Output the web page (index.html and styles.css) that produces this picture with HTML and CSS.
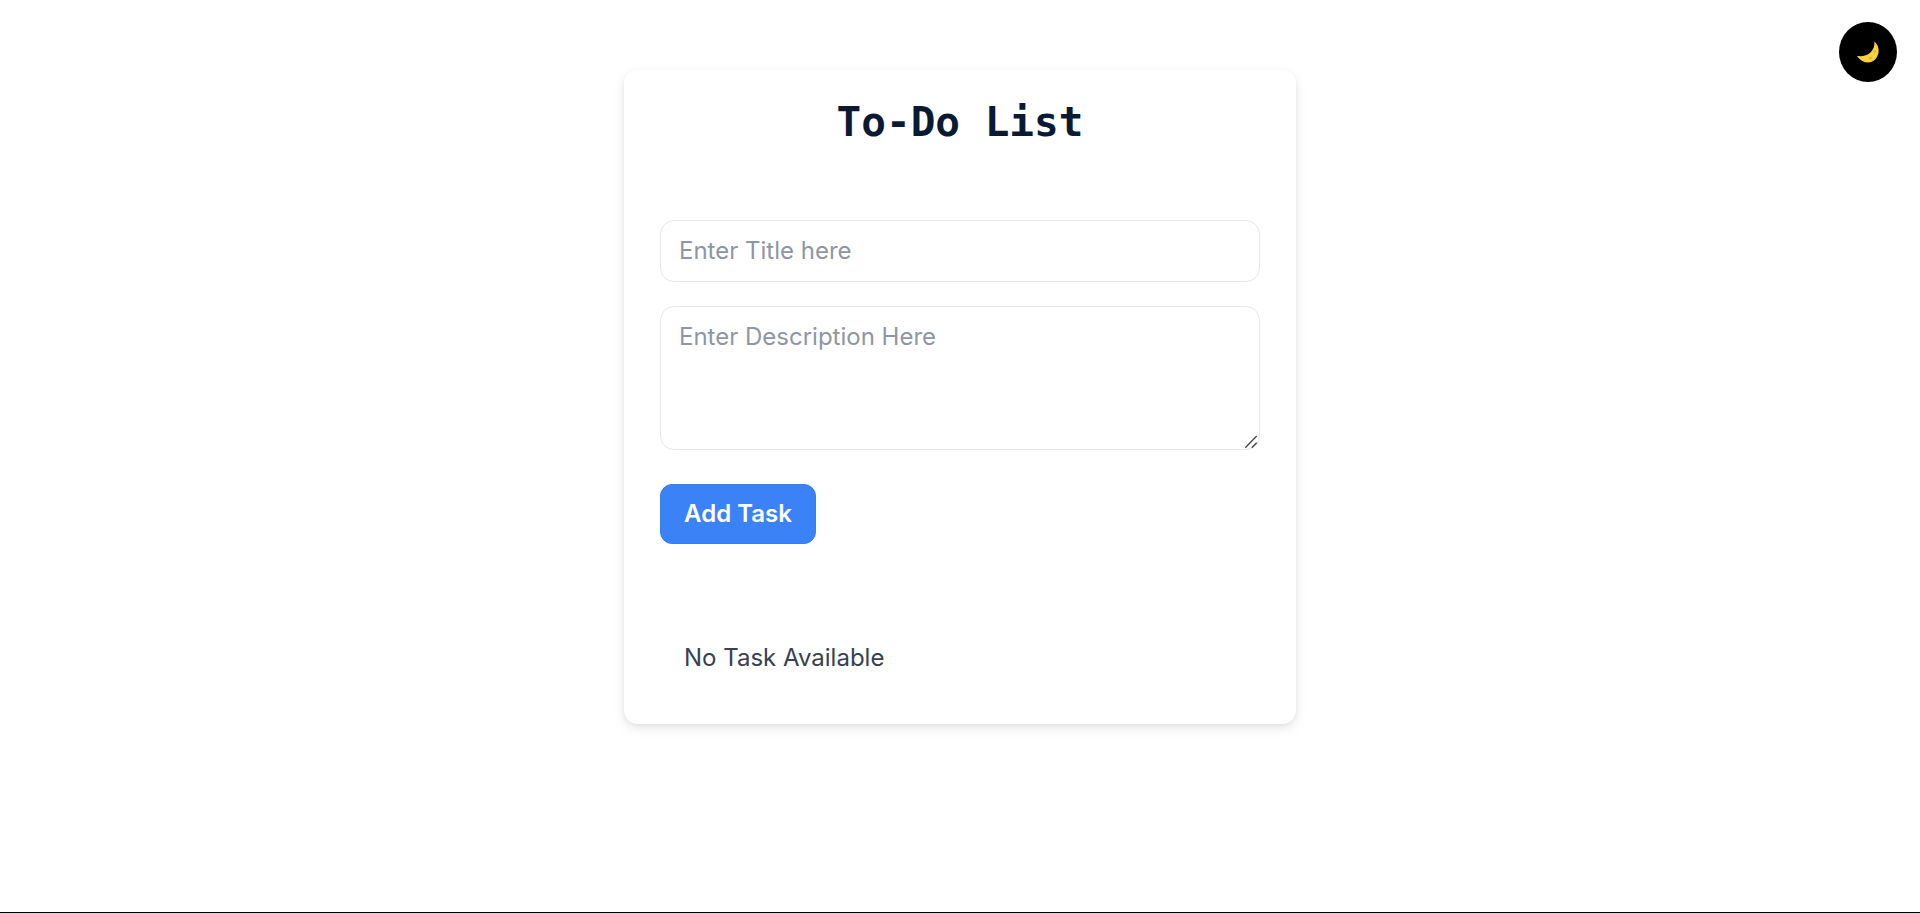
FILE: index.html
```html
<!DOCTYPE html>
<html lang="en">
<head>
    <meta charset="UTF-8">
    <meta name="viewport" content="width=device-width, initial-scale=1.0">
    <title>To-Do List</title>
    <link rel="stylesheet" href="styles.css">
</head>
<body>
    <button class="theme-toggle" aria-label="Toggle dark mode">
        <!-- crescent moon -->
        <svg class="moon" viewBox="0 0 22 22" width="22" height="22">
            <path d="M17.4 .5C20.5 3 22 7 21.6 11 21 17 16 21.8 10.500 21.500 6 21.300 2.500 18.500 0 15 5 15.500 10 15 13.500 11.500 16.500 8.500 17.800 4.500 17.400 .5Z" fill="#fcd33d"/>
            <circle cx="13.500" cy="17" r="1.500" fill="#f0b52f"/>
            <circle cx="17.500" cy="10.500" r="1.200" fill="#f0b52f"/>
        </svg>
    </button>

    <div class="page">
        <div class="card">
            <h1>To-Do List</h1>

            <form class="task-form">
                <input class="field" type="text" placeholder="Enter Title here">
                <textarea class="field field-area" placeholder="Enter Description Here"></textarea>
                <button class="button" type="button">Add Task</button>
            </form>

            <p class="empty">No Task Available</p>
        </div>
    </div>
</body>
</html>
```

FILE: styles.css
```css
* {
    box-sizing: border-box;
}
body {
    margin: 0;
    background-color: #fff;
    font-family: Inter, "Liberation Sans", sans-serif;
}
.page {
    height: 913px;
    padding-top: 70px;
    border-bottom: 1px solid #000;
}
.card {
    width: 672px;
    height: 654px;
    margin: 0 auto;
    padding: 0 36px;
    background-color: #fff;
    border-radius: 14px;
    box-shadow: 0 4px 12px rgba(0, 0, 0, 0.1), 0 2px 4px rgba(0, 0, 0, 0.04);
}
h1 {
    margin: 0;
    padding-top: 28px;
    height: 150px;
    color: #0a1a33;
    font-family: "DejaVu Sans Mono", monospace;
    font-size: 41px;
    font-weight: 700;
    line-height: 48px;
    text-align: center;
}
.task-form {
    display: flex;
    flex-direction: column;
    align-items: flex-start;
}
.field {
    display: block;
    width: 100%;
    height: 62px;
    padding: 0 18px 2px;
    border: 1px solid #e5e7eb;
    border-radius: 14px;
    outline: none;
    color: #1f2937;
    font-family: inherit;
    font-size: 24px;
}
.field::placeholder {
    color: #8f96a3;
}
.field-area {
    height: 144px;
    margin-top: 24px;
    padding-top: 15px;
}
.field-area::-webkit-resizer {
    background: url("data:image/svg+xml,%3Csvg xmlns='http://www.w3.org/2000/svg' width='15' height='15'%3E%3Cpath d='M1.300 13.700 12.700 2M7.700 13.700l5-5' stroke='%23444' stroke-width='1.300' fill='none'/%3E%3C/svg%3E") no-repeat;
}
.button {
    height: 60px;
    width: 156px;
    margin-top: 34px;
    padding: 0 0 2px;
    background-color: #3b82f6;
    color: #fff;
    border: 1px solid #377ef2;
    border-radius: 12px;
    font-family: inherit;
    font-size: 24px;
    font-weight: 600;
    cursor: pointer;
}
.empty {
    margin: 99px 0 0;
    padding-left: 24px;
    color: #374151;
    font-size: 24px;
    line-height: 30px;
}
.theme-toggle {
    position: fixed;
    top: 22px;
    right: 23px;
    display: flex;
    align-items: center;
    justify-content: center;
    width: 58px;
    height: 60px;
    padding: 0;
    background-color: #000;
    border: none;
    border-radius: 50%;
    cursor: pointer;
}
```
